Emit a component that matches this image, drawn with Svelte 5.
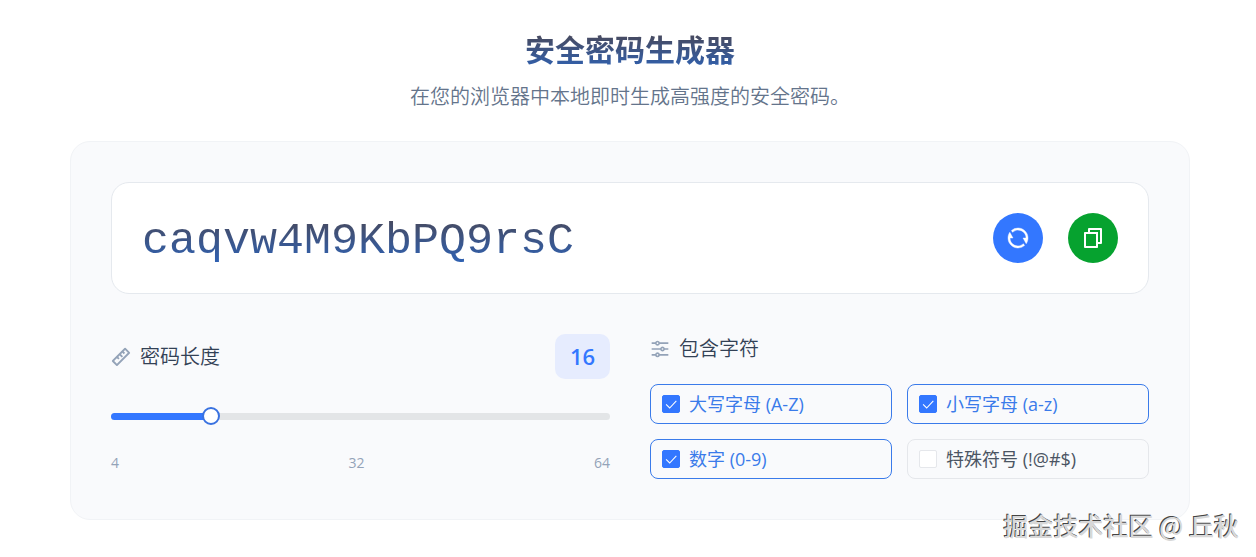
<script lang="ts">
  const MIN = 4;
  const MAX = 64;

  const CHARSETS: Record<string, string> = {
    upper: 'ABCDEFGHIJKLMNOPQRSTUVWXYZ',
    lower: 'abcdefghijklmnopqrstuvwxyz',
    digits: '0123456789',
    symbols: '!@#$'
  };

  let password = $state('caqvw4M9KbPQ9rsC');
  let length = $state(16);
  let options = $state([
    { key: 'upper', label: '大写字母 (A-Z)', checked: true },
    { key: 'lower', label: '小写字母 (a-z)', checked: true },
    { key: 'digits', label: '数字 (0-9)', checked: true },
    { key: 'symbols', label: '特殊符号 (!@#$)', checked: false }
  ]);

  let percent = $derived(((length - MIN) / (MAX - MIN)) * 100);

  function generate() {
    const pool = options.filter((o) => o.checked).map((o) => CHARSETS[o.key]).join('');
    if (!pool) {
      password = '';
      return;
    }
    const values = crypto.getRandomValues(new Uint32Array(length));
    password = Array.from(values, (v) => pool[v % pool.length]).join('');
  }

  function copy() {
    navigator.clipboard?.writeText(password);
  }
</script>

<main class="page">
  <header class="intro">
    <h1>安全密码生成器</h1>
    <p>在您的浏览器中本地即时生成高强度的安全密码。</p>
  </header>

  <section class="panel">
    <div class="result">
      <output class="password">{password}</output>
      <div class="actions">
        <button class="round refresh" type="button" aria-label="重新生成" onclick={generate}>
          <svg viewBox="0 0 24 24" width="24" height="24" fill="currentColor" stroke="currentColor" stroke-width="0.4">
            <path d="M5.463 4.433A9.96 9.96 0 0 1 12 2c5.523 0 10 4.477 10 10 0 2.136-.67 4.116-1.81 5.74L17 12h3A8 8 0 0 0 6.46 6.228l-.997-1.795zm13.074 15.134A9.96 9.96 0 0 1 12 22C6.477 22 2 17.523 2 12c0-2.136.67-4.116 1.81-5.74L7 12H4a8 8 0 0 0 13.54 5.772l.997 1.795z" />
          </svg>
        </button>
        <button class="round copy" type="button" aria-label="复制密码" onclick={copy}>
          <svg viewBox="0 0 24 24" width="24" height="24" fill="currentColor">
            <path d="M7 6V3a1 1 0 0 1 1-1h12a1 1 0 0 1 1 1v14a1 1 0 0 1-1 1h-3v3c0 .552-.45 1-1.007 1H4.007A1.001 1.001 0 0 1 3 21l.003-14c0-.552.45-1 1.007-1H7zM5.003 8 5 20h10V8H5.003zM9 6h8v10h2V4H9v2z" />
          </svg>
        </button>
      </div>
    </div>

    <div class="settings">
      <div class="length">
        <div class="length-head">
          <label class="heading" for="length">
            <svg viewBox="1.6 1.6 20.8 20.8" width="20" height="20" fill="currentColor">
              <path d="M6.343 14.728l-1.414 1.414 2.828 2.829L19.071 7.657l-2.828-2.829-1.414 1.415 1.414 1.414-1.414 1.414-1.415-1.414L12 9.071l2.121 2.121-1.414 1.415-2.121-2.122-1.414 1.415 1.414 1.414-1.414 1.414-1.415-1.414-1.414 1.414zM16.95 2.707l4.243 4.243a1 1 0 0 1 0 1.414L8.464 21.092a1 1 0 0 1-1.414 0l-4.242-4.243a1 1 0 0 1 0-1.414L15.536 2.707a1 1 0 0 1 1.414 0z" />
            </svg>
            密码长度
          </label>
          <span class="badge">{length}</span>
        </div>
        <div class="slider">
          <div class="track"><div class="fill" style="width: {percent}%"></div></div>
          <input id="length" type="range" min={MIN} max={MAX} bind:value={length} oninput={generate} />
        </div>
        <div class="scale">
          <span>4</span>
          <span>32</span>
          <span>64</span>
        </div>
      </div>

      <div class="charset" role="group" aria-labelledby="charset-title">
        <div class="heading" id="charset-title">
          <svg viewBox="0 0 24 24" width="20" height="20" fill="currentColor">
            <path d="M6.17 18a3.001 3.001 0 0 1 5.66 0H22v2H11.83a3.001 3.001 0 0 1-5.66 0H2v-2h4.17zm6-7a3.001 3.001 0 0 1 5.66 0H22v2h-4.17a3.001 3.001 0 0 1-5.66 0H2v-2h10.17zm-6-7a3.001 3.001 0 0 1 5.66 0H22v2H11.83a3.001 3.001 0 0 1-5.66 0H2V4h4.17zM9 6a1 1 0 1 0 0-2 1 1 0 0 0 0 2zm6 7a1 1 0 1 0 0-2 1 1 0 0 0 0 2zm-6 7a1 1 0 1 0 0-2 1 1 0 0 0 0 2z" />
          </svg>
          包含字符
        </div>
        <div class="options">
          {#each options as option (option.key)}
            <label class="option" class:checked={option.checked}>
              <input type="checkbox" bind:checked={option.checked} onchange={generate} />
              <svg class="box" viewBox="0 0 18 18" width="18" height="18">
                <path d="M3.500 9.500l4 4 7.500-8" fill="none" stroke="currentColor" stroke-width="1.200" />
              </svg>
              <span>{option.label}</span>
            </label>
          {/each}
        </div>
      </div>
    </div>
  </section>

  <div class="watermark">掘金技术社区 @ 丘秋</div>
</main>

<style>
  :global(body) {
    background: #fff;
  }

  .page {
    position: relative;
    min-height: 100vh;
    box-sizing: border-box;
    padding: 30px 66px 38px 70px;
    font-family: 'Open Sans', 'Noto Sans CJK SC', sans-serif;
    color: #334155;
  }

  .intro {
    display: flex;
    flex-direction: column;
    align-items: center;
    gap: 12px;
    margin-bottom: 29px;
  }

  h1,
  p {
    margin: 0;
  }

  h1 {
    font-size: 30px;
    line-height: 40px;
    font-weight: 700;
    background: linear-gradient(#4b4652, #2f62b4);
    background-clip: text;
    color: transparent;
  }

  p {
    font-size: 20px;
    line-height: 30px;
    font-weight: 350;
    color: #64748b;
  }

  .panel {
    box-sizing: border-box;
    padding: 40px;
    border: 1px solid #f1f3f6;
    border-radius: 20px;
    background: #f9fafc;
  }

  .result {
    display: flex;
    align-items: center;
    justify-content: space-between;
    padding: 30px;
    border: 1px solid #e5e9ee;
    border-radius: 18px;
    background: #fff;
  }

  .password {
    padding-top: 8px;
    font-family: 'Liberation Mono', monospace;
    font-size: 45px;
    line-height: 42px;
    background: linear-gradient(#4b4652, #2f62b4);
    background-clip: text;
    color: transparent;
  }

  .actions {
    display: flex;
    gap: 25px;
  }

  .round {
    display: flex;
    align-items: center;
    justify-content: center;
    width: 50px;
    height: 50px;
    padding: 0;
    border: none;
    border-radius: 50%;
    color: #fff;
    cursor: pointer;
  }

  .refresh {
    background: #3377ff;
  }

  .copy {
    background: #06a22f;
  }

  .settings {
    display: grid;
    grid-template-columns: 1fr 1fr;
    gap: 40px;
    margin-top: 40px;
  }

  .heading {
    display: flex;
    align-items: center;
    gap: 9px;
    font-size: 20px;
    line-height: 30px;
    font-weight: 350;
    color: #334155;
  }

  .heading svg {
    color: #94a3b8;
  }

  .length-head {
    display: flex;
    align-items: center;
    justify-content: space-between;
  }

  .badge {
    min-width: 55px;
    box-sizing: border-box;
    border-radius: 10px;
    background: #e6ecfe;
    font-size: 22px;
    line-height: 45px;
    font-weight: 600;
    text-align: center;
    color: #3377ff;
  }

  .slider {
    display: grid;
    align-items: center;
    height: 18px;
    margin-top: 28px;
  }

  .track,
  .slider input {
    grid-area: 1 / 1;
  }

  .track {
    height: 7px;
    border-radius: 4px;
    background: #e3e5e7;
    overflow: hidden;
  }

  .fill {
    height: 100%;
    background: #3377ff;
  }

  .slider input {
    appearance: none;
    width: calc(100% + 18px);
    height: 18px;
    margin: 0 -9px;
    background: transparent;
    cursor: pointer;
  }

  .slider input::-webkit-slider-thumb {
    appearance: none;
    box-sizing: border-box;
    width: 18px;
    height: 18px;
    border: 2px solid #3a72e0;
    border-radius: 50%;
    background: #fff;
  }

  .scale {
    display: flex;
    justify-content: space-between;
    margin-top: 28px;
    font-size: 14px;
    line-height: 20px;
    color: #94a3b8;
  }

  .charset {
    display: flex;
    flex-direction: column;
    gap: 20px;
  }

  .options {
    display: grid;
    grid-template-columns: 1fr 1fr;
    gap: 15px;
  }

  .option {
    position: relative;
    display: flex;
    align-items: center;
    gap: 9px;
    height: 40px;
    box-sizing: border-box;
    padding: 0 11px;
    border: 1px solid #e5e7eb;
    border-radius: 8px;
    font-size: 18px;
    line-height: 26px;
    font-weight: 400;
    color: #4b5563;
    cursor: pointer;
  }

  .option input {
    position: absolute;
    opacity: 0;
    width: 18px;
    height: 18px;
    margin: 0;
    cursor: pointer;
  }

  .box {
    box-sizing: border-box;
    border: 1px solid #e5e7eb;
    border-radius: 2px;
    background: #fff;
    color: transparent;
  }

  .option.checked {
    border-color: #3a7bea;
    color: #3a7bea;
  }

  .option.checked .box {
    border-color: #3377ff;
    background: #3377ff;
    color: #fff;
  }

  .watermark {
    position: absolute;
    right: 17px;
    bottom: 15px;
    font-family: 'Noto Sans CJK SC', sans-serif;
    font-size: 25px;
    line-height: 36px;
    font-weight: 500;
    color: #d8d8d8;
    text-shadow: -1px -1px 0 #444;
  }
</style>
